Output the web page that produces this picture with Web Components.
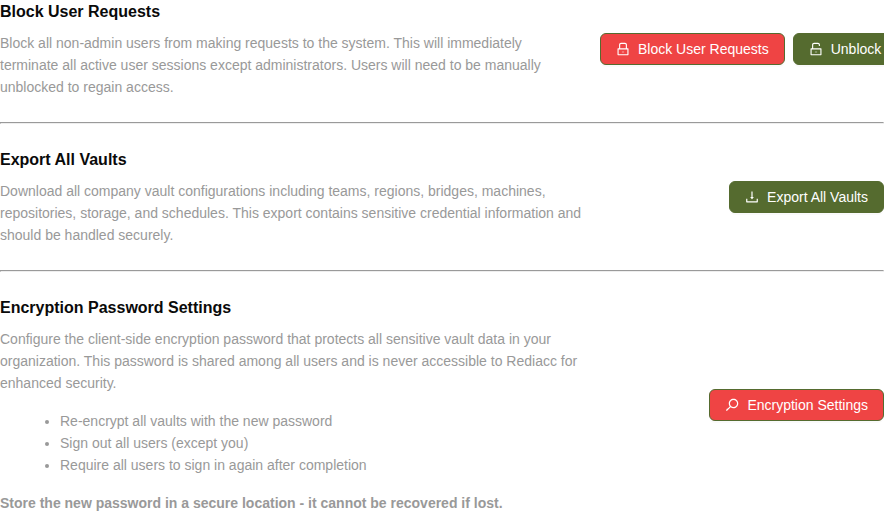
<!DOCTYPE html>
<html lang="en">
<head>
<meta charset="utf-8">
<title>System Settings</title>
<style>
html, body { margin: 0; background: #fff; overflow: hidden; }
body { font: 14px/22px "Liberation Sans", Arial, sans-serif; color: #999; }
p { margin: 0; }
ul { margin: 16px 0; padding: 0 0 0 40px; }
li { margin-left: 20px; }
</style>
</head>
<body>
<settings-page>
  <settings-row heading="Block User Requests">
    <p>Block all non-admin users from making requests to the system. This will immediately<br>terminate all active user sessions except administrators. Users will need to be manually<br>unblocked to regain access.</p>
    <action-button slot="actions" icon="lock" danger>Block User Requests</action-button>
    <action-button slot="actions" icon="unlock">Unblock</action-button>
  </settings-row>
  <settings-divider></settings-divider>
  <settings-row heading="Export All Vaults">
    <p>Download all company vault configurations including teams, regions, bridges, machines,<br>repositories, storage, and schedules. This export contains sensitive credential information and<br>should be handled securely.</p>
    <action-button slot="actions" icon="download">Export All Vaults</action-button>
  </settings-row>
  <settings-divider></settings-divider>
  <settings-row heading="Encryption Password Settings">
    <p>Configure the client-side encryption password that protects all sensitive vault data in your<br>organization. This password is shared among all users and is never accessible to Rediacc for<br>enhanced security.</p>
    <ul>
      <li>Re-encrypt all vaults with the new password</li>
      <li>Sign out all users (except you)</li>
      <li>Require all users to sign in again after completion</li>
    </ul>
    <p><strong>Store the new password in a secure location - it cannot be recovered if lost.</strong></p>
    <action-button slot="actions" icon="key" danger>Encryption Settings</action-button>
  </settings-row>
</settings-page>
<script>
const ICONS = {
  lock: "M832 464h-68V240c0-70.7-57.3-128-128-128H388c-70.7 0-128 57.3-128 128v224h-68c-17.7 0-32 14.3-32 32v384c0 17.7 14.3 32 32 32h640c17.7 0 32-14.3 32-32V496c0-17.7-14.3-32-32-32zM332 240c0-30.9 25.1-56 56-56h248c30.9 0 56 25.1 56 56v224H332V240zm460 600H232V536h560v304zM440 690h144v28H440z",
  unlock: "M832 464H332V240c0-30.9 25.1-56 56-56h248c30.9 0 56 25.1 56 56v68c0 4.4 3.6 8 8 8h56c4.4 0 8-3.6 8-8v-68c0-70.7-57.3-128-128-128H388c-70.7 0-128 57.3-128 128v224h-68c-17.7 0-32 14.3-32 32v384c0 17.7 14.3 32 32 32h640c17.7 0 32-14.3 32-32V496c0-17.7-14.3-32-32-32zm-40 376H232V536h560v304zM440 690h144v28H440z",
  download: "M505.7 661a8 8 0 0012.6 0l112-141.7c4.1-5.2.4-12.9-6.3-12.9h-74.1V168c0-4.4-3.6-8-8-8h-60c-4.4 0-8 3.6-8 8v338.3H400c-6.7 0-10.4 7.7-6.3 12.9l112 141.8zM878 626h-60c-4.4 0-8 3.6-8 8v154H214V634c0-4.4-3.6-8-8-8h-60c-4.4 0-8 3.6-8 8v198c0 17.7 14.3 32 32 32h684c17.7 0 32-14.3 32-32V634c0-4.4-3.6-8-8-8z",
  key: "M608 112c-167.9 0-304 136.1-304 304 0 70.3 23.9 135 63.9 186.5l-148 148-20-20-50 50 20 20-40 40a8.03 8.03 0 000 11.3l42.3 42.3c3.1 3.1 8.2 3.1 11.3 0l238-238A304.06 304.06 0 00608 720c167.9 0 304-136.1 304-304S775.9 112 608 112zm161.2 465.2C726.2 620.3 668.9 644 608 644c-60.9 0-118.2-23.7-161.2-66.8-43.1-43-66.8-100.3-66.8-161.2 0-60.9 23.7-118.2 66.8-161.2 43-43.1 100.3-66.8 161.2-66.8 60.9 0 118.2 23.7 161.2 66.8 43.1 43 66.8 100.3 66.8 161.2 0 60.9-23.7 118.2-66.8 161.2z"
};

customElements.define("settings-page", class extends HTMLElement {
  constructor() {
    super();
    this.attachShadow({ mode: "open" }).innerHTML = `
      <style>:host { display: flex; flex-direction: column; gap: 24px; width: 884px; height: 514px; overflow: hidden; }</style>
      <slot></slot>`;
  }
});

customElements.define("settings-divider", class extends HTMLElement {
  constructor() {
    super();
    this.attachShadow({ mode: "open" }).innerHTML = `
      <style>:host { display: block; } hr { margin: 0; height: 0; color: gray; border: 1px inset; }</style>
      <hr>`;
  }
});

customElements.define("settings-row", class extends HTMLElement {
  constructor() {
    super();
    this.attachShadow({ mode: "open" }).innerHTML = `
      <style>
        :host { display: flex; align-items: center; justify-content: space-between; flex: none; }
        .text { width: 584px; flex: none; white-space: nowrap; }
        h2 { margin: 0 0 8px; font-size: 16px; line-height: 24px; font-weight: 700; color: #0a0a0a; }
        .actions { display: flex; gap: 8px; flex: none; margin-left: 16px; }
      </style>
      <div class="text"><h2></h2><slot></slot></div>
      <div class="actions"><slot name="actions"></slot></div>`;
  }
  connectedCallback() {
    this.shadowRoot.querySelector("h2").textContent = this.getAttribute("heading");
  }
});

customElements.define("action-button", class extends HTMLElement {
  constructor() {
    super();
    this.attachShadow({ mode: "open" }).innerHTML = `
      <style>
        :host { display: block; flex: none; }
        button {
          display: flex; align-items: center; gap: 8px; box-sizing: border-box; height: 32px;
          margin: 0; padding: 0 15px; border: 1px solid #556b2f; border-radius: 6px;
          background: #556b2f; color: #fff; font: inherit; white-space: nowrap;
          box-shadow: 0 2px 0 rgba(0, 0, 0, .02);
        }
        :host([danger]) button { background: #ef4444; }
        svg { display: block; width: 14px; height: 14px; fill: currentColor; }
      </style>
      <button type="button"><svg viewBox="64 64 896 896" aria-hidden="true"><path/></svg><span><slot></slot></span></button>`;
  }
  connectedCallback() {
    this.shadowRoot.querySelector("path").setAttribute("d", ICONS[this.getAttribute("icon")]);
  }
});
</script>
</body>
</html>
